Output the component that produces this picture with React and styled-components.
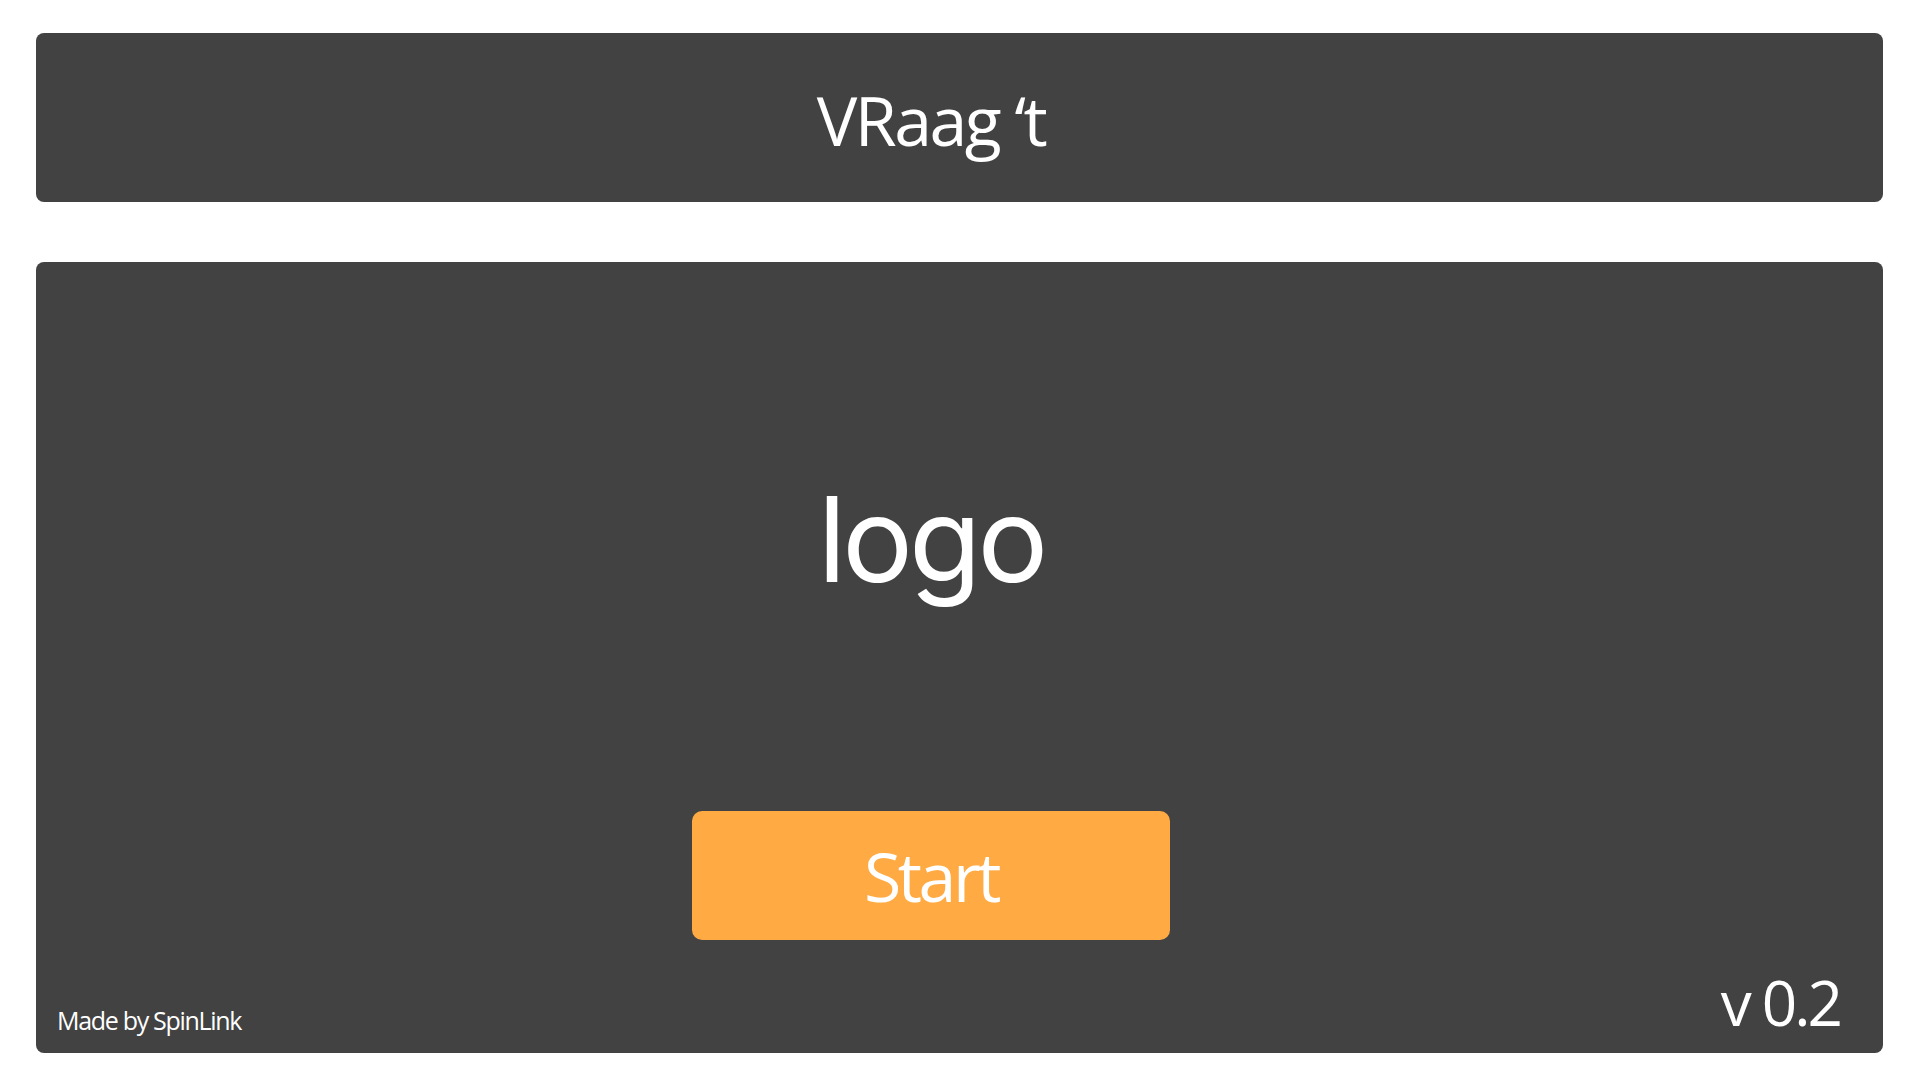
import React from "react";
import styled, { createGlobalStyle } from "styled-components";

const Global = createGlobalStyle`
  html, body { margin: 0; padding: 0; background: #ffffff; }
  body { font-family: "Open Sans", "Noto Sans", sans-serif; }
`;

const Page = styled.div`
  width: 1920px;
  height: 1080px;
  box-sizing: border-box;
  padding: 33px 37px 27px 36px;
  display: flex;
  flex-direction: column;
  gap: 60px;
`;

const Header = styled.header`
  height: 169px;
  background: #424242;
  border-radius: 8px;
  display: flex;
  align-items: center;
  justify-content: center;
  padding-right: 57px;
  box-sizing: border-box;
`;

const Title = styled.h1`
  margin: 0;
  font-family: "Open Sans", sans-serif;
  font-weight: 400;
  font-size: 68px;
  letter-spacing: -2.5px;
  color: #ffffff;
  line-height: 1;
  transform: translateY(2px);
`;

const Main = styled.main`
  flex: 1;
  background: #424242;
  border-radius: 8px;
  position: relative;
  display: flex;
  flex-direction: column;
  align-items: center;
  padding-right: 57px;
  box-sizing: border-box;
`;

const Logo = styled.div`
  margin-top: 218px;
  font-family: "Inter", "DejaVu Sans", sans-serif;
  font-size: 118px;
  letter-spacing: -4px;
  line-height: 1;
  color: #ffffff;
`;

const StartButton = styled.button`
  margin-top: 213px;
  width: 478px;
  height: 129px;
  border: none;
  border-radius: 10px;
  background: #ffaa43;
  color: #ffffff;
  font-family: "Open Sans", sans-serif;
  font-size: 68px;
  letter-spacing: -3.5px;
  line-height: 1;
  cursor: pointer;
`;

const Footer = styled.div`
  position: absolute;
  left: 21px;
  right: 43px;
  bottom: 20px;
  display: flex;
  justify-content: space-between;
  align-items: flex-end;
  color: #ffffff;
`;

const Credit = styled.span`
  font-family: "Open Sans", sans-serif;
  font-size: 25px;
  letter-spacing: -1.3px;
  line-height: 1;
`;

const Version = styled.span`
  font-family: "Open Sans", sans-serif;
  font-size: 62px;
  letter-spacing: -3px;
  line-height: 1;
`;

export default function App() {
  return (
    <>
      <Global />
      <Page>
        <Header>
          <Title>VRaag ‘t</Title>
        </Header>
        <Main>
          <Logo>logo</Logo>
          <StartButton>Start</StartButton>
          <Footer>
            <Credit>Made by SpinLink</Credit>
            <Version>v 0.2</Version>
          </Footer>
        </Main>
      </Page>
    </>
  );
}
